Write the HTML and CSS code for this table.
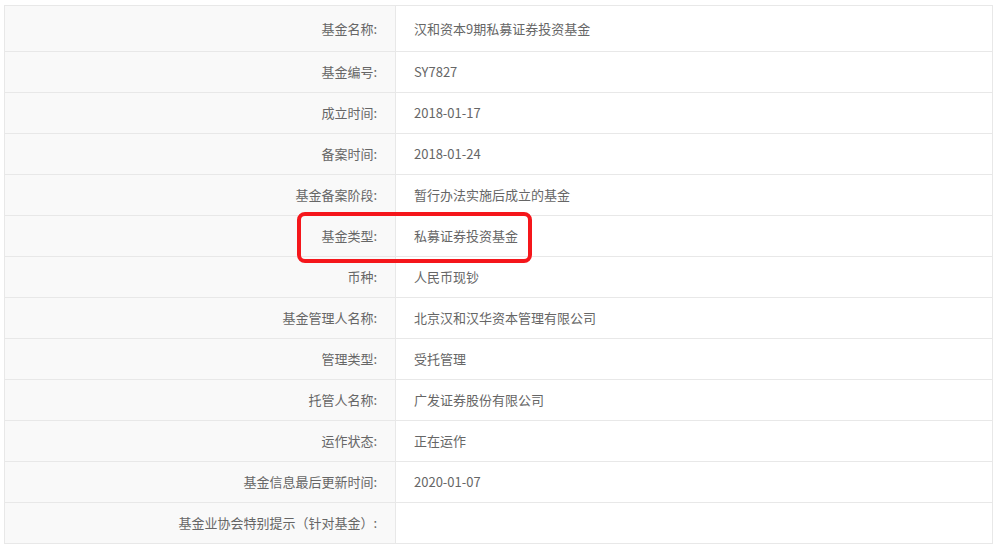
FILE: index.html
```html
<!DOCTYPE html>
<html lang="zh">
<head>
<meta charset="utf-8">
<link rel="stylesheet" href="styles.css">
</head>
<body>
<div class="wrap">
<table class="info">
<tr class="first"><td class="lbl">基金名称:</td><td class="val">汉和资本9期私募证券投资基金</td></tr>
<tr><td class="lbl">基金编号:</td><td class="val">SY7827</td></tr>
<tr><td class="lbl">成立时间:</td><td class="val">2018-01-17</td></tr>
<tr><td class="lbl">备案时间:</td><td class="val">2018-01-24</td></tr>
<tr><td class="lbl">基金备案阶段:</td><td class="val">暂行办法实施后成立的基金</td></tr>
<tr><td class="lbl">基金类型:</td><td class="val">私募证券投资基金</td></tr>
<tr><td class="lbl">币种:</td><td class="val">人民币现钞</td></tr>
<tr><td class="lbl">基金管理人名称:</td><td class="val">北京汉和汉华资本管理有限公司</td></tr>
<tr><td class="lbl">管理类型:</td><td class="val">受托管理</td></tr>
<tr><td class="lbl">托管人名称:</td><td class="val">广发证券股份有限公司</td></tr>
<tr><td class="lbl">运作状态:</td><td class="val">正在运作</td></tr>
<tr><td class="lbl">基金信息最后更新时间:</td><td class="val">2020-01-07</td></tr>
<tr><td class="lbl">基金业协会特别提示（针对基金）:</td><td class="val"></td></tr>
</table>
<div class="mark"></div>
</div>
</body>
</html>
```
FILE: styles.css
```css
html, body {
  margin: 0;
  padding: 0;
  background: #fff;
}
.wrap {
  position: relative;
  padding: 5px 0 0 4px;
}
.info {
  border-collapse: collapse;
  width: 989px;
  font-family: "Noto Sans CJK SC", "Microsoft YaHei", sans-serif;
  font-size: 13px;
  color: #666;
}
.info td {
  border: 1px solid #e8e8e8;
  height: 41px;
  padding: 0 18px;
  box-sizing: border-box;
  vertical-align: middle;
  line-height: 18px;
}
.info tr.first td {
  height: 46px;
}
.info td.lbl {
  width: 391px;
  background: #f9f9f9;
  text-align: right;
}
.info td.val {
  text-align: left;
}
.mark {
  position: absolute;
  left: 297px;
  top: 212px;
  width: 235px;
  height: 51px;
  box-sizing: border-box;
  border: 4px solid #f5161b;
  border-radius: 8px;
}
```
